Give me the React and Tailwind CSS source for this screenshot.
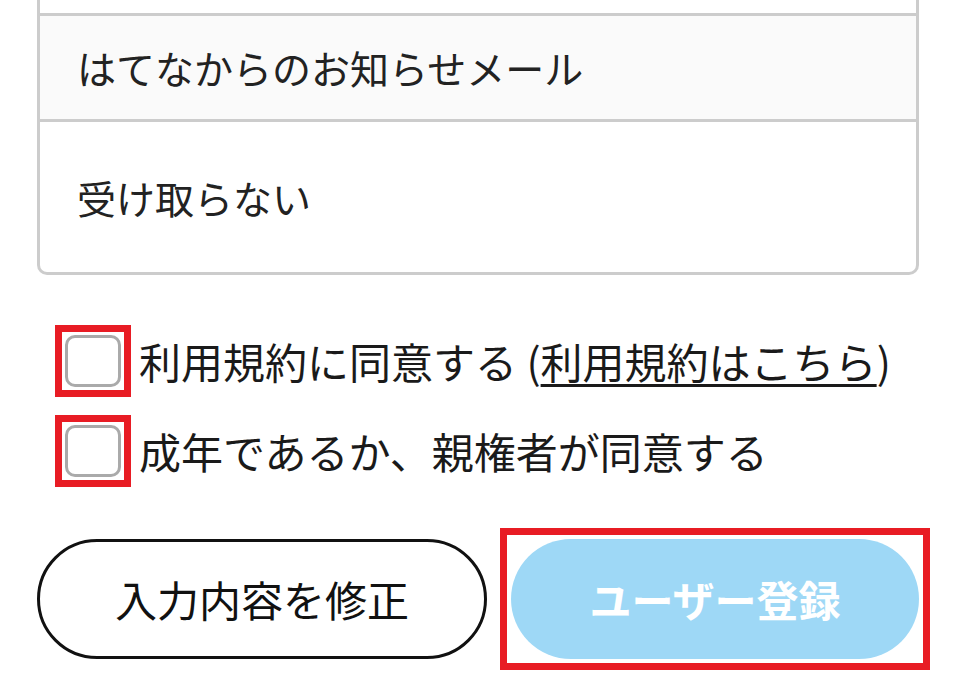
import React from 'react';

const font = "font-['Noto_Sans_CJK_JP','Noto_Sans',sans-serif]";

function MarkedCheckbox() {
  return (
    <span className="shrink-0 border-[7px] border-[#e81c24] p-[3px]">
      <span className="block h-[52px] w-[56px] rounded-[10px] border-[3px] border-[#aaaaaa] bg-white" />
    </span>
  );
}

export default function App() {
  return (
    <div className={`min-h-[682px] overflow-hidden bg-white pl-[37px] pr-[35px] text-[#1a1a1a] ${font}`}>
      {/* mail option list (scrolled, top row cut off) */}
      <div className="rounded-b-[10px] border-x-[3px] border-b-[3px] border-[#cccccc]">
        <div className="h-[13px]" />
        <div className="flex h-[106px] items-center border-t-[3px] border-[#cccccc] bg-[#fafafa] pl-[37px] text-[39px] leading-none text-[#222]">
          はてなからのお知らせメール
        </div>
        <div className="flex h-[153px] items-center border-t-[3px] border-[#cccccc] pl-[37px] text-[39px] leading-none text-[#222]">
          受け取らない
        </div>
      </div>

      <div className="mt-[50px] ml-[18px] flex flex-col gap-[18px]">
        <label className="flex items-center gap-[8px] text-[42px] leading-none">
          <MarkedCheckbox />
          <span className="whitespace-nowrap">
            利用規約に同意する (
            <span className="underline decoration-[3px] underline-offset-[5px]">利用規約はこちら</span>)
          </span>
        </label>
        <label className="flex items-center gap-[8px] text-[42px] leading-none">
          <MarkedCheckbox />
          <span className="whitespace-nowrap">成年であるか、親権者が同意する</span>
        </label>
      </div>

      <div className="mt-[52px] flex gap-[24px]">
        <button className="flex h-[120px] w-[450px] items-center justify-center rounded-full border-[3px] border-[#111] bg-white text-[42px] leading-none text-[#111]">
          入力内容を修正
        </button>
        <div className="relative">
          <button className="flex h-[120px] w-[408px] items-center justify-center rounded-full bg-[#9ed8f6] text-[42px] font-bold leading-none text-white">
            ユーザー登録
          </button>
          <span className="pointer-events-none absolute -inset-[11px] border-[7px] border-[#e81c24]" />
        </div>
      </div>
    </div>
  );
}
